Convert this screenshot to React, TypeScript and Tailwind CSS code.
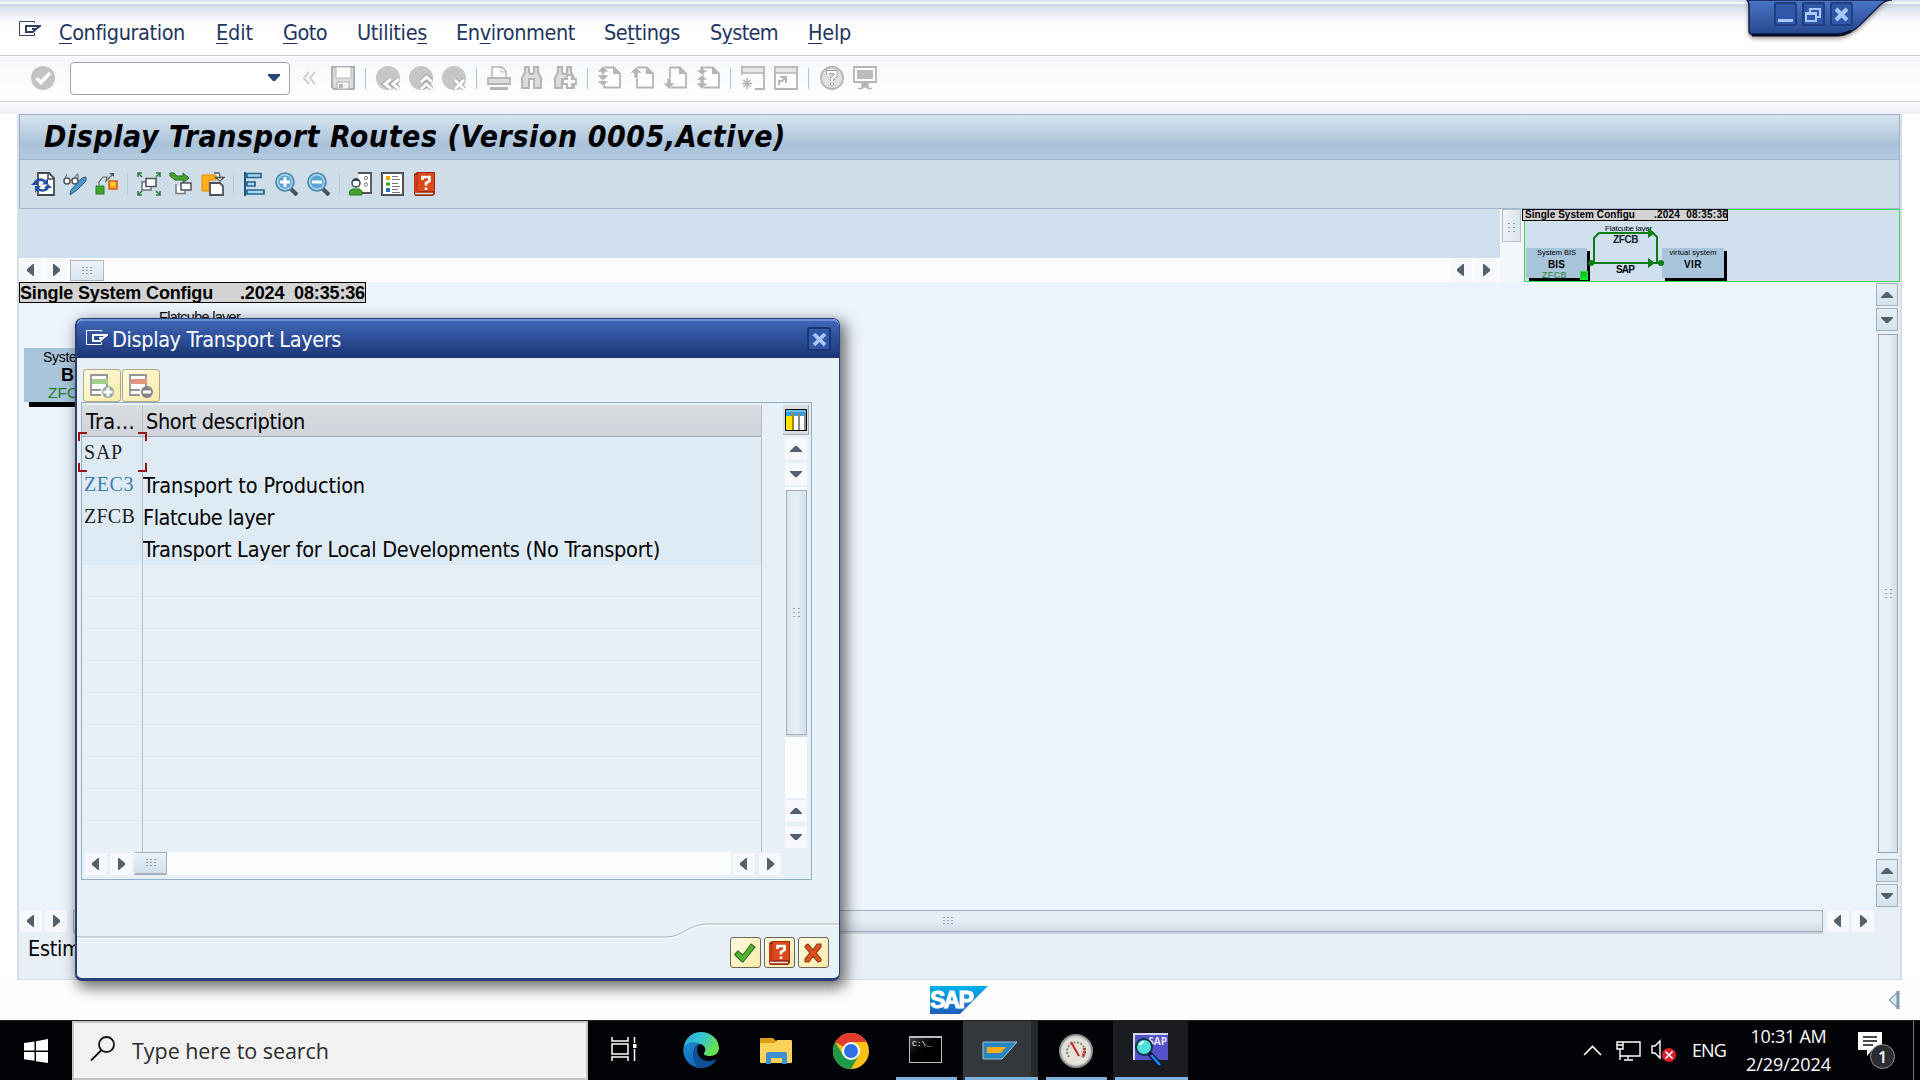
import React, { useLayoutEffect, useRef } from 'react';

const UI = "font-['DejaVu_Sans_Condensed','DejaVu_Sans',sans-serif] [font-stretch:condensed]";
const WIN = "font-['Open_Sans',sans-serif] [font-stretch:normal]";
const ARIAL = "font-['Liberation_Sans',sans-serif] [font-stretch:normal]";

/** Single-line text whose letter spacing is adjusted to fill a given width. */
function Fit({ w, className = '', children }: { w: number; className?: string; children: React.ReactNode }) {
  const ref = useRef<HTMLSpanElement>(null);
  useLayoutEffect(() => {
    const el = ref.current;
    if (!el) return;
    el.style.letterSpacing = '0px';
    const n = (el.textContent || '').length;
    el.style.letterSpacing = (w - el.getBoundingClientRect().width) / n + 'px';
  }, [w]);
  return (
    <span ref={ref} className={'inline-block whitespace-pre ' + className}>
      {children}
    </span>
  );
}

function Icon({ children, w = 24, h = 24, className = '' }: { children: React.ReactNode; w?: number; h?: number; className?: string }) {
  return (
    <svg width={w} height={h} viewBox={`0 0 ${w} ${h}`} className={'shrink-0 ' + className} fill="none">
      {children}
    </svg>
  );
}

function Hand({ color }: { color: string }) {
  return (
    <Icon w={23} h={18}>
      <path d="M16.500 3V1.500H1.500V15.500H16.500V13" stroke={color} />
      <path d="M8 6H22L18 9H14M8 5V12H15L18 9" stroke={color} strokeWidth="2" />
    </Icon>
  );
}

type Dir = 'up' | 'down' | 'left' | 'right';
function Arrow({ dir, boxed, className = '' }: { dir: Dir; boxed?: boolean; className?: string }) {
  const d = { up: 'M6 14V13L11 8H13L18 13V14Z', down: 'M6 8H18V9L13 14H11L6 9Z', left: 'M15 5V17H14L8 12V10L14 5Z', right: 'M9 5V17H10L16 12V10L10 5Z' }[dir];
  return (
    <span
      className={
        'flex shrink-0 items-center justify-center ' +
        (boxed ? 'h-[23px] w-[22px] border border-[#a2adbd] bg-gradient-to-b from-[#e4edf5] to-[#d4e4ec] ' : 'h-[22px] w-[22px] bg-[#f6f8fb] ') +
        className
      }
    >
      <Icon w={24} h={22}>
        <path d={d} fill="#53616e" />
      </Icon>
    </span>
  );
}

function Grip({ vertical }: { vertical?: boolean }) {
  return vertical ? (
    <Icon w={7} h={9}>
      <path d="M0 .5h2M5 .5h2M0 4.500h2M5 4.500h2M0 8.500h2M5 8.500h2" stroke="#8fa2b2" />
    </Icon>
  ) : (
    <Icon w={10} h={8}>
      <path d="M0 .5h2M4 .5h2M8 .5h2M0 3.500h2M4 3.500h2M8 3.500h2M0 6.500h2M4 6.500h2M8 6.500h2" stroke="#8fa2b2" />
    </Icon>
  );
}

const G = '#b5b5b5';
const L = '#dcdcdc';

function Binoculars({ plus }: { plus?: boolean }) {
  return (
    <Icon>
      <path d="M5 1H9V6L10 8H13L14 6V1H18V6L21 12V22H14V13H9V22H2V12L5 6Z" fill={L} stroke={G} strokeWidth="2" />
      {plus && <path d="M14 9h5v4h4v5h-4v4h-5v-4h-4v-5h4z" fill="#fff" stroke={G} strokeWidth="1.800" />}
    </Icon>
  );
}

function PageArrow({ kind }: { kind: 'first' | 'prev' | 'next' | 'last' }) {
  const arrows = {
    first: 'M6 0L12 6H8V8H4V6H0ZM4 8H8V9H12L6 15L0 9H4Z M4 14H8V15H12L6 20L0 15H4Z',
    prev: 'M6 1L12 7H8V12H4V7H0Z',
    next: 'M4 12H8V17H12L6 23L0 17H4Z',
    last: 'M4 0H8V4H12L6 9L0 4H4ZM6 9L12 14H8V17H12L6 23L0 17H4V14H0Z',
  }[kind];
  return (
    <Icon>
      <path d="M7 1.500H17L23 7.500V21.500H7V1.500" stroke={G} strokeWidth="1.800" fill="#fff" />
      <path d="M16 1V8H23Z" fill={G} />
      <path d={arrows} fill={G} stroke="#fff" strokeWidth=".6" />
    </Icon>
  );
}

function RoundNav({ kind }: { kind: 'back' | 'up' | 'cancel' }) {
  const d =
    kind === 'back' ? 'M15 13L9 18L15 23M23 13L17 18L23 23' : kind === 'up' ? 'M12 16L17.500 11L23 16M12 23L17.500 18L23 23' : 'M13 14L22 23M22 14L13 23';
  return (
    <Icon>
      <circle cx="12" cy="12" r="12" fill="#c6c6c6" />
      <path d={d} stroke="#aaa" strokeWidth="5" />
      <path d={d} stroke="#fff" strokeWidth="3" />
    </Icon>
  );
}

function HelpBook() {
  return (
    <Icon>
      <path d="M1 2L4 0H22V22L20 24H2L1 22Z" fill="#9e2c12" />
      <path d="M5 1H21V19H5Z" fill="#dc4a1c" />
      <path d="M1 3H5V20H1Z" fill="#c83a16" />
      <path d="M2 21.500H20" stroke="#e9e4e2" strokeWidth="1.500" />
      <path d="M9.500 8V5H16.500V9L13 11V13.500M13 15.500V18" stroke="#fff" strokeWidth="2.600" />
    </Icon>
  );
}

function Zoomer({ minus }: { minus?: boolean }) {
  return (
    <Icon>
      <path d="M16 17L22 23" stroke="#4d5156" strokeWidth="4" />
      <circle cx="10" cy="10" r="9" fill="#a5d0ea" stroke="#4987ad" strokeWidth="1.600" />
      <circle cx="10" cy="10" r="6.500" fill="#5aa5d3" />
      <path d={minus ? 'M5 10H15' : 'M5 10H15M10 5V15'} stroke="#fff" strokeWidth="3" />
    </Icon>
  );
}

function Sep({ className = '' }: { className?: string }) {
  return <span className={'w-px shrink-0 ' + className} />;
}

const U = ({ children }: { children: string }) => <span className="underline decoration-1 underline-offset-[3px]">{children}</span>;

function MenuBar() {
  const items: [number, number, React.ReactNode][] = [
    [13, 126, <><U>C</U>onfiguration</>],
    [31, 37, <><U>E</U>dit</>],
    [30, 44, <><U>G</U>oto</>],
    [30, 70, <>Utilitie<U>s</U></>],
    [29, 119, <>En<U>v</U>ironment</>],
    [29, 76, <>Se<U>t</U>tings</>],
    [30, 68, <>S<U>y</U>stem</>],
    [30, 43, <><U>H</U>elp</>],
  ];
  return (
    <div className="flex h-[52px] shrink-0 items-start border-b border-[#c3cad4] bg-[linear-gradient(#cdd8e6_0px,#e6ebf3_8px,#fbfcfe_18px,#fff_26px)]">
      <div className="ml-[18px] mt-[16px] w-[28px]"><Hand color="#33415f" /></div>
      <div className="mt-[15px] flex text-[21.5px] leading-[28px] text-[#1f3560]">
        {items.map(([ml, w, node], i) => (
          <div key={i} className="flex" style={{ marginLeft: ml, width: w }}>
            <Fit w={w}>{node}</Fit>
          </div>
        ))}
      </div>
    </div>
  );
}

function StandardToolbar() {
  const s = 'mx-[10px] h-[21px] bg-[#a9c3dd]';
  return (
    <div className="mt-px flex h-[45px] shrink-0 items-center border-b border-[#cdd2d8] bg-gradient-to-b from-[#f4f7fa] to-white pb-[2px] pl-[31px]">
      <Icon>
        <circle cx="12" cy="12" r="12" fill="#c3c3c3" />
        <path d="M5.500 12L10 16.500L19 7" stroke="#fff" strokeWidth="3.500" />
      </Icon>
      <div className="ml-[15px] flex h-[33px] w-[220px] items-center justify-end rounded-sm border border-[#a0a3a9] bg-white pr-[9px]">
        <Icon w={12} h={8}><path d="M0 0H12V1.500L7 7H5L0 1.500Z" fill="#2a4678" /></Icon>
      </div>
      <Icon w={14} h={14} className="ml-[12px]"><path d="M7 1L2 7L7 13M13 1L8 7L13 13" stroke="#cfcfcf" strokeWidth="2" /></Icon>
      <Icon className="ml-[15px]">
        <path d="M1 1H23V23H3L1 21Z" fill="#dcdcdc" stroke="#aeaeae" strokeWidth="2" />
        <path d="M5 1H20V12H5Z" fill="#fff" stroke="#b5b5b5" />
        <path d="M6 16H18V23H6Z" fill="#f4f4f4" stroke="#b0b0b0" />
        <path d="M8 18H12V22H8Z" fill="#b5b5b5" />
      </Icon>
      <Sep className={s} />
      <div className="flex gap-[9px]"><RoundNav kind="back" /><RoundNav kind="up" /><RoundNav kind="cancel" /></div>
      <Sep className={s} />
      <div className="flex gap-[9px]">
        <Icon>
          <path d="M5 11V1H15L19 5V11" fill="#fff" stroke={G} strokeWidth="1.500" />
          <path d="M14 1V6H19" stroke={G} />
          <path d="M1 12H23V18H1Z" fill={L} stroke={G} strokeWidth="1.800" />
          <path d="M3 22.500H21" stroke={G} strokeWidth="3" />
        </Icon>
        <Binoculars />
        <Binoculars plus />
      </div>
      <Sep className={s} />
      <div className="-ml-px flex gap-[9px]"><PageArrow kind="first" /><PageArrow kind="prev" /><PageArrow kind="next" /><PageArrow kind="last" /></div>
      <Sep className={s} />
      <div className="flex gap-[9px]">
        <Icon>
          <path d="M1 9V1H23V23H14" stroke={G} strokeWidth="1.800" />
          <path d="M1 1H23V7H1Z" fill="#e6e6e6" stroke={G} strokeWidth="1.500" />
          <path d="M6 12V23M1 17.500H11M2.500 14L9.500 21M9.500 14L2.500 21" stroke={G} strokeWidth="1.500" />
        </Icon>
        <Icon>
          <path d="M1 1H23V23H1Z" fill="#fff" stroke={G} strokeWidth="1.800" />
          <path d="M1 1H23V7H1Z" fill="#e6e6e6" stroke={G} strokeWidth="1.500" />
          <path d="M5 19V15H9M6 11H12V17M12 11L7 16" stroke={G} strokeWidth="2" />
        </Icon>
      </div>
      <Sep className={s} />
      <div className="ml-px flex gap-[9px]">
        <Icon>
          <circle cx="12" cy="12" r="11" fill="#e0e0e0" stroke={G} strokeWidth="1.800" />
          <path d="M8 9V6H15.500V10L12 12.500V15M12 16.500V19.500" stroke="#9d9d9d" strokeWidth="4" />
          <path d="M8 9V6H15.500V10L12 12.500V15M12 16.500V19" stroke="#fff" strokeWidth="2.200" />
        </Icon>
        <Icon>
          <path d="M1 1H23V16H1Z" fill="#fff" stroke={G} strokeWidth="1.800" />
          <path d="M4 4H20V13H4Z" fill="#bdbdbd" />
          <path d="M9 17H15V21H9ZM5 22.500H10M14 22.500H19" fill={G} stroke={G} strokeWidth="1.500" />
        </Icon>
      </div>
    </div>
  );
}

function AppToolbar() {
  const s = 'ml-[8px] mr-[9px] h-[20px] bg-[#b3c7da]';
  const green = '#36774a';
  return (
    <div className="flex h-[49px] shrink-0 items-center border-x border-b border-[#a3b5cd] bg-[#cfdde8] pl-[11px]">
      <div className="flex gap-[8px]">
        <Icon>
          <path d="M7 1H18L23 6V23H7Z" fill="#fff" stroke="#45494f" strokeWidth="1.800" />
          <path d="M17 1V7H23" stroke="#45494f" strokeWidth="1.500" />
          <path d="M4 12C4 8 10 6 14 9.500" stroke="#2450a4" strokeWidth="2.600" /><path d="M17 6V12.500H11Z" fill="#2450a4" /><path d="M0 13L4 9L8 13Z" fill="#2450a4" />
          <path d="M17 14C17 18 11 20 7 17" stroke="#2450a4" strokeWidth="2.600" /><path d="M4 21V14H10Z" fill="#2450a4" /><path d="M13 14L17 18L21 14Z" fill="#2450a4" transform="rotate(180 17 15)" />
        </Icon>
        <Icon>
          <circle cx="4" cy="9" r="3" fill="#fff" stroke="#555" strokeWidth="1.500" />
          <circle cx="12" cy="9" r="3" fill="#fff" stroke="#555" strokeWidth="1.500" />
          <path d="M1 8L4 2M7 8H9M12 5L14 2H15V7" stroke="#666" />
          <path d="M23 5V9L14 18L7 23L8 18L19 6Z" fill="#4d97c8" stroke="#286088" />
        </Icon>
        <Icon>
          <path d="M4 13V10L8 5H12L11 9L18 2" stroke="#666" strokeWidth="1.200" />
          <path d="M14 1H19V5Z" fill="#555" />
          <path d="M1 14H9V22H1Z" fill="#41a62a" stroke="#2c7a1c" /><path d="M14 9H22V17H14Z" fill="#ffa81c" stroke="#d8601c" strokeWidth="1.600" />
          <path d="M16 10h4v4h-4z" fill="#ffd23c" />
        </Icon>
      </div>
      <Sep className={s} />
      <div className="flex gap-[8px]">
        <Icon>
          <path d="M1 5V1H5M1 1L5 5M19 1H23V5M23 1L19 5M1 19V23H5M1 23L5 19M23 19V23H19M23 23L19 19" stroke={green} strokeWidth="1.600" />
          <path d="M9 10H5V18H14V15" stroke="#6b6f74" strokeWidth="1.500" fill="#fff" />
          <path d="M9 6.500H19V14.500H9Z" fill="#fff" stroke="#50545a" strokeWidth="1.600" />
        </Icon>
        <Icon>
          <path d="M7 12V21.500H16V19" stroke="#777" strokeWidth="1.500" fill="#fff" /><path d="M12 11H22V18H12Z" fill="#fff" stroke="#50545a" strokeWidth="1.500" />
          <path d="M1 1H5L8 4H14V1L20 6L14 11V8H6L1 4Z" fill="#46a430" stroke="#2d6f20" />
        </Icon>
        <Icon>
          <path d="M1 3H15V8H8V19H1Z" fill="#ffb019" stroke="#e68a00" />
          <path d="M13 1H17Q19 1 19 6M14.500 5.500H23L19 9Z" fill="#fff" stroke="#555" strokeWidth="1.300" />
          <path d="M9 11H19L22 14V23H9Z" fill="#fff" stroke="#4f5358" strokeWidth="1.800" />
        </Icon>
      </div>
      <Sep className={s} />
      <div className="flex gap-[8px]">
        <Icon>
          <path d="M2 0V24" stroke="#1d5681" strokeWidth="2" />
          <path d="M4 1.500H18V5.500H4ZM4 10H12V14H4ZM4 18H21V22H4Z" fill="#a9d6ef" stroke="#24658f" strokeWidth="1.700" />
        </Icon>
        <Zoomer />
        <Zoomer minus />
      </div>
      <Sep className={s} />
      <div className="flex gap-[8px]">
        <Icon>
          <path d="M9 1H22V21H12" fill="#fff" stroke="#4f5358" strokeWidth="1.800" />
          <circle cx="17" cy="6" r="1.600" stroke="#777" /><circle cx="17" cy="12.500" r="1.600" stroke="#777" />
          <circle cx="7" cy="11" r="4" fill="#fff" stroke="#3f4247" strokeWidth="1.500" /><path d="M3 10C3 5 11 5 11 10L9 9H5Z" fill="#3f4247" />
          <path d="M.5 23V19L3 17H10L13 19V23Z" fill="#43a32d" stroke="#2c7a1c" />
        </Icon>
        <Icon>
          <path d="M1 1H22V23H1Z" fill="#fff" stroke="#4f5358" strokeWidth="2" />
          <path d="M5 5H9M5 7H9" stroke="#e8a800" strokeWidth="2" /><path d="M5 12H9" stroke="#3b9a28" strokeWidth="3" /><path d="M5 18H9" stroke="#2572b4" strokeWidth="4" />
          <path d="M11 4.500H17M11 7.500H19M11 11.500H17M11 14.500H19M11 17.500H17M11 20.500H19" stroke="#777" />
        </Icon>
        <HelpBook />
      </div>
    </div>
  );
}

function OverviewGraph() {
  const g = '#0a7d14';
  return (
    <div className={'relative h-[73px] w-[376px] shrink-0 border border-[#3ad84a] bg-[#d0e0ef] ' + ARIAL}>
      <div className="absolute -left-[3px] -top-[1px] flex h-[12px] w-[206px] items-center border border-black bg-[#d3d3d3] pl-[2px] text-[10px] font-bold leading-[10px]">
        <Fit w={110}>Single System Configu</Fit><Fit w={74} className="ml-[19px]">.2024  08:35:36</Fit>
      </div>
      <div className="absolute left-[1px] top-[38px] flex h-[30px] w-[61px] flex-col items-center bg-[#a9c5dc] leading-none shadow-[3px_3px_0_#000]">
        <Fit w={39} className="mt-px text-[7.500px]">System BIS</Fit>
        <Fit w={17} className="mt-[3px] text-[10px] font-bold">BIS</Fit>
        <span className="mt-[1px] flex gap-[13px] pl-[17px] text-[9px] text-[#1f8030]"><Fit w={25}>ZFCB</Fit><span className="h-[9px] w-[8px] bg-[#13f02b] text-center text-[9px] leading-[9px]">R</span></span>
      </div>
      <div className="absolute left-[137px] top-[38px] flex h-[30px] w-[62px] flex-col items-center bg-[#a9c5dc] leading-none shadow-[3px_3px_0_#000]">
        <Fit w={47} className="mt-px text-[7.500px]">virtual system</Fit>
        <Fit w={18} className="mt-[3px] text-[10px] font-bold">VIR</Fit>
      </div>
      <span className="absolute left-[80px] top-[14px] text-[8px] leading-[9px]"><Fit w={47}>Flatcube layer</Fit></span>
      <span className="absolute left-[88px] top-[24px] text-[10px] font-bold leading-[11px] text-[#16202c]"><Fit w={25}>ZFCB</Fit></span>
      <span className="absolute left-[91px] top-[54px] text-[10px] font-bold leading-[11px]"><Fit w={18}>SAP</Fit></span>
      <Icon w={80} h={42} className="absolute left-[62px] top-[18px]">
        <path d="M4 35H74M7 35V10L12 5H66L70 9V35" stroke={g} strokeWidth="2" />
        <path d="M61 0L68 5L61 10ZM61 30L68 35L61 40Z" fill={g} /><circle cx="4" cy="35" r="3" fill={g} /><circle cx="74" cy="35" r="3" fill={g} />
      </Icon>
    </div>
  );
}

function MainCanvas() {
  return (
    <div className={'relative h-[627px] flex-1 bg-[#ebf3fc] ' + ARIAL}>
      <div className="absolute left-0 top-0 flex h-[21px] w-[347px] items-center border border-black bg-[#d3d3d3] text-[18px] font-bold leading-[20px]">
        <Fit w={193}>Single System Configu</Fit><Fit w={125} className="ml-[27px]">.2024  08:35:36</Fit>
      </div>
      <span className="absolute left-[140px] top-[26px] text-[14.500px] leading-[18px]"><Fit w={81}>Flatcube layer</Fit></span>
      <div className="absolute left-[5px] top-[66px] h-[54px] w-[98px] bg-[#a9c5dc] shadow-[5px_5px_0_#000]">
        <span className="absolute left-[19px] top-0 text-[14px] leading-[18px]"><Fit w={70}>System BIS</Fit></span>
        <span className="absolute left-[37px] top-[17px] text-[18px] font-bold leading-[20px]">BIS</span>
        <span className="absolute left-[24px] top-[36px] text-[15.500px] leading-[18px] text-[#1f8030]">ZFCB</span>
      </div>
    </div>
  );
}

function TitleTab() {
  const b = 'flex h-[24px] w-[23px] items-center justify-center rounded-[2px] border-2 border-[#1f3d80] bg-[#3158a8]';
  return (
    <div className="absolute right-0 top-0 h-[44px] w-[180px]">
      <Icon w={180} h={44} className="drop-shadow-[0_2px_2px_rgba(60,40,30,0.5)]">
        <defs><linearGradient id="tab" x2="0" y2="1"><stop stopColor="#4a74c6" /><stop offset="1" stopColor="#26478f" /></linearGradient></defs>
        <path d="M7 0Q9 2 9 6V30Q9 35 14 35H96Q110 35 120 25L140 5Q145 0 152 0Z" fill="url(#tab)" stroke="#121f4c" strokeWidth="1.500" />
        <path d="M12 35H96Q104 35 111 31" stroke="#060b26" strokeWidth="3" />
      </Icon>
      <div className="absolute left-[34px] top-[2px] flex gap-[5px]">
        <span className={b}><Icon w={17} h={17}><path d="M1 14.500H16" stroke="#a9c6ff" strokeWidth="3" /></Icon></span>
        <span className={b}><Icon w={17} h={17}><path d="M1 7H11V15H1ZM5 7V3H15V11H11M1 8H11M5 3H15" stroke="#a9c6ff" strokeWidth="2" /></Icon></span>
        <span className={b}><Icon w={15} h={15}><path d="M2 2L13 13M13 2L2 13" stroke="#a9c6ff" strokeWidth="4" /></Icon></span>
      </div>
    </div>
  );
}

const layers = [
  { id: 'SAP', text: '', w: 0, color: 'text-[#222]', iw: 39 },
  { id: 'ZEC3', text: 'Transport to Production', w: 222, color: 'text-[#3a7fb0]', iw: 50 },
  { id: 'ZFCB', text: 'Flatcube layer', w: 131, color: 'text-[#222]', iw: 51 },
  { id: '', text: 'Transport Layer for Local Developments (No Transport)', w: 517, color: '', iw: 0 },
];

function RowsIcon({ minus }: { minus?: boolean }) {
  return (
    <Icon>
      <path d="M1 1H18V21H1Z" fill="#fff" />
      <path d="M1 22V1H17V13M1 16H11M1 21H11" stroke="#949494" strokeWidth="1.800" />
      <path d="M2 5H18V10H2Z" fill={minus ? '#e5937a' : '#a6cf8c'} />
      {minus ? (
        <><circle cx="18" cy="18" r="6" fill="#85858b" /><path d="M14 18H22" stroke="#fff" strokeWidth="3" /></>
      ) : (
        <><circle cx="18" cy="18" r="6" fill="#93a79e" /><path d="M13.500 18H22.500M18 13.500V22.500" stroke="#fff" strokeWidth="3" /></>
      )}
    </Icon>
  );
}

function LayersTable() {
  return (
    <div className="ml-[4px] flex h-[478px] w-[731px] shrink-0 flex-col border border-[#93aec8] bg-[#e8f0f7]">
      <div className="flex h-[449px]">
        <div className="relative mt-[2px] flex w-[680px] flex-col border-r border-[#b3bfca] bg-[#e8f0f7]">
          <div className="flex h-[32px] shrink-0 border-b border-[#a5abb4] bg-gradient-to-b from-[#d8dde0] to-[#cfd3db] pt-[2px] text-[21.5px] leading-[30px]">
            <div className="w-[61px] pl-[4px]"><Fit w={49}>Tra...</Fit></div>
            <div className="pl-[3px]"><Fit w={159}>Short description</Fit></div>
          </div>
          {layers.map((r, i) => (
            <div key={i} className="flex h-[32px] shrink-0 bg-[#deebf5]">
              <div className={"w-[61px] pl-[2px] font-['Liberation_Serif',serif] text-[20px] leading-[31px] " + r.color}>
                {r.id && <Fit w={r.iw}>{r.id}</Fit>}
              </div>
              <div className="text-[21.5px] leading-[33px]">{r.text && <Fit w={r.w}>{r.text}</Fit>}</div>
            </div>
          ))}
          {Array.from({ length: 8 }, (_, i) => (
            <div key={i} className="h-[32px] shrink-0 border-b border-[#dde7ee]" />
          ))}
          <div className="absolute bottom-0 left-[60px] top-0 w-px bg-[#b5c2cd]" />
          <Icon w={70} h={40} className="absolute -left-[4px] top-[27px]">
            <path d="M1 9V1H9M60 1H68V9M1 31V39H9M60 39H68V31" stroke="#981518" strokeWidth="2" />
          </Icon>
        </div>
        <div className="ml-[21px] flex w-[26px] flex-col items-center">
          <div className="mt-[2px] flex h-[30px] w-[26px] shrink-0 items-center justify-center border-b border-r border-[#a5abb4] bg-[#d8dde0]">
            <Icon w={22} h={22}>
              <path d="M1 1H21V21H1Z" fill="#fff" />
              <path d="M1 1H21V7H1Z" fill="#3a9fdd" /><path d="M1 2H21" stroke="#a1daf6" />
              <path d="M1 7H7V21H1Z" fill="#ffe600" /><path d="M8 4V21" stroke="#a78600" strokeWidth="2" /><path d="M14 4V21M20 4V21" stroke="#888" strokeWidth="2" />
              <path d="M.5 .5H21.500V21.500H.5Z" stroke="#000" />
            </Icon>
          </div>
          <Arrow dir="up" className="mt-[3px]" />
          <Arrow dir="down" className="mt-[3px]" />
          <div className="mt-[2px] flex w-[22px] flex-1 flex-col bg-[#fbfcfd] pl-[1px] pt-[3px]">
            <div className="flex h-[245px] items-center justify-center border border-[#a3afbc] bg-gradient-to-r from-[#dde7ee] via-[#e6eff8] to-[#d3dfe8] shadow-[0_2px_0_#d5dae0]"><Grip vertical /></div>
          </div>
          <Arrow dir="up" className="mt-[2px]" />
          <Arrow dir="down" className="mb-[4px] mt-[4px]" />
        </div>
      </div>
      <div className="flex h-[23px] items-center pl-[3px]">
        <Arrow dir="left" /><Arrow dir="right" className="ml-[3px]" />
        <div className="ml-[2px] flex h-[23px] w-[597px] bg-[#fbfcfd]">
          <div className="flex h-[23px] w-[33px] items-center justify-center border border-b-2 border-[#a3afbc] border-l-transparent bg-gradient-to-b from-[#eaf2f9] to-[#d3dfe9]"><Grip /></div>
        </div>
        <Arrow dir="left" className="ml-[2px]" /><Arrow dir="right" className="ml-[4px]" />
      </div>
    </div>
  );
}

function LayersDialog() {
  const y = 'flex items-center justify-center rounded-[3px] border bg-gradient-to-br from-[#fffbe0] to-[#fbeaa6] ';
  return (
    <div className="absolute left-[75px] top-[318px] flex h-[663px] w-[765px] flex-col overflow-visible rounded-[7px] border-b-[3px] border-l-2 border-r border-t border-[#2a3f76] bg-[#e8f0f8] shadow-[4px_5px_14px_2px_rgba(50,45,45,0.68)]">
      <div className="flex h-[39px] shrink-0 items-center rounded-t-[6px] border-t-2 border-[#6a90d6] bg-gradient-to-b from-[#4166b8] to-[#1a3675] pr-[8px]">
        <div className="-mt-[4px] ml-[8px]"><Hand color="#fff" /></div>
        <div className="ml-[4px] flex-1 text-[21.5px] leading-[30px] text-white"><Fit w={229}>Display Transport Layers</Fit></div>
        <span className="-mt-[1px] flex h-[24px] w-[24px] items-center justify-center rounded-[3px] border-2 border-[#1a3576] bg-[#3158a8]">
          <Icon w={15} h={15}><path d="M2 2L13 13M13 2L2 13" stroke="#a9c6ff" strokeWidth="3.800" /></Icon>
        </span>
      </div>
      <div className="flex h-[44px] shrink-0 items-end gap-[1px] pl-[6px]">
        <span className={y + 'h-[33px] w-[38px] border-[#aba888]'}><RowsIcon /></span>
        <span className={y + 'h-[33px] w-[38px] border-[#aba888]'}><RowsIcon minus /></span>
      </div>
      <LayersTable />
      <Icon w={762} h={16} className="mt-[43px]">
        <path d="M0 15H590C605 15 612 2 631 2H762" stroke="#fff" strokeWidth="1.500" />
        <path d="M0 14H590C605 14 612 1 631 1H762" stroke="#a7b1c3" />
      </Icon>
      <div className="-mt-[2px] flex gap-[3px] pl-[653px]">
        <span className={y + 'h-[31px] w-[31px] border-[#6b6558]'}><Icon><path d="M1 13L4 10L9 14L17 3L21 6L9 21H8L1 14Z" fill="#55b52e" stroke="#2f7027" strokeWidth="1.200" /></Icon></span>
        <span className={y + 'h-[31px] w-[31px] border-[#6b6558]'}><HelpBook /></span>
        <span className={y + 'h-[31px] w-[31px] border-[#6b6558]'}>
          <Icon><path d="M4 4L6 3L11 9L15 3H19V6L14 12L19 18V20L16 21L11 15L7 21H3V18L8 12L3 6Z" fill="#e2511d" stroke="#93401e" strokeWidth="1.200" /></Icon>
        </span>
      </div>
    </div>
  );
}

function TaskItem({ children, bg = '', bar = '' }: { children: React.ReactNode; bg?: string; bar?: string }) {
  return (
    <div className={'relative flex w-[75px] items-center justify-center ' + bg}>
      {children}
      {bar && <div className={'absolute bottom-0 h-[3px] bg-[#7eb2dd] ' + bar} />}
    </div>
  );
}

function Taskbar() {
  return (
    <div className={'flex h-[60px] shrink-0 border-t border-[#222] bg-[#020307] ' + WIN}>
      <div className="flex w-[72px] items-center justify-center">
        <Icon><path d="M0 4L10.500 2.500V11.500H0ZM12 2.200L24 0V11.500H12ZM0 13H10.500V21.800L0 20.300ZM12 13H24V24L12 22.200Z" fill="#fff" /></Icon>
      </div>
      <div className="flex h-[59px] w-[516px] items-center border-2 border-[#c6c6c6] bg-[#f2f2f2] pl-[16px]">
        <Icon w={25} h={26} className="-mt-[3px]"><circle cx="16.500" cy="8.500" r="7.500" stroke="#111" strokeWidth="1.800" /><path d="M11.500 14L1 24.500" stroke="#111" strokeWidth="1.800" /></Icon>
        <Fit w={197} className="ml-[17px] mt-px text-[21.5px] leading-[28px] text-[#2b2b2b]">Type here to search</Fit>
      </div>
      <div className="flex">
        <TaskItem>
          <Icon w={26} h={24} className="-ml-[4px] -mt-[3px]"><path d="M1 0V4H17V0M1 24V20H17V24M1 7H17V17H1ZM23.500 0V6M23.500 12V24" stroke="#fff" strokeWidth="1.500" /><path d="M22 7H25.500V11H22Z" fill="#fff" /></Icon>
        </TaskItem>
        <TaskItem>
          <Icon w={36} h={36} className="-mt-px">
            <defs>
              <linearGradient id="e1" x2="1" y2=".4"><stop stopColor="#29a6e0" /><stop offset=".55" stopColor="#35c6cf" /><stop offset="1" stopColor="#6be04f" /></linearGradient>
              <linearGradient id="e2" x2="1" y2="1"><stop stopColor="#1c8fd8" /><stop offset="1" stopColor="#0d4f9e" /></linearGradient>
            </defs>
            <path d="M0.500 16C2 6 9 0 18 0C28 0 36 7 36 16C36 21 32 24 27 24C23 24 20 23 21 21C24 18 22 13 17 12C10 10 3 12 0.500 16Z" fill="url(#e1)" />
            <path d="M0.500 16C3 10 11 9 17 12C12 13 10 18 12 23C15 30 24 32 33 27C30 33 24 36 18 36C8 36-1 27 0.500 16Z" fill="url(#e2)" />
            <path d="M17 12C8 15 8 28 15 35C24 37 31 33 33.500 27C27 31 19 29 16 24C13 19 14 14 17 12Z" fill="#0f4f95" />
          </Icon>
        </TaskItem>
        <TaskItem>
          <Icon w={32} h={28}>
            <path d="M0 2Q0 1 1 1H13L16 4V8H0Z" fill="#d9a017" /><path d="M0 6H15L17 3H31Q32 3 32 4V25Q32 26 31 26H1Q0 26 0 25Z" fill="#fbd35b" />
            <path d="M6 17Q6 15 8 15H25Q27 15 27 17V27H22V21H11V27H6Z" fill="#3c91d2" />
          </Icon>
        </TaskItem>
        <TaskItem>
          <Icon w={36} h={36}>
            <circle cx="18" cy="18" r="18" fill="#fbc116" />
            <path d="M18 18L2.400 9A18 18 0 0 1 33.600 9H18Z" fill="#e33b2e" />
            <path d="M2.400 9A18 18 0 0 0 18 36L25.800 22.500L10.200 22.500Z" fill="#1f9a49" />
            <circle cx="18" cy="18" r="9" fill="#fff" /><circle cx="18" cy="18" r="7" fill="#2f6fe4" />
          </Icon>
        </TaskItem>
        <TaskItem bar="left-[8px] w-[61px]">
          <div className="-mt-[3px] h-[27px] w-[33px] border border-t-2 border-[#b8bcc0] bg-gradient-to-br from-[#3a3a3a] to-black to-60% pl-[2px] font-['Liberation_Mono',monospace] text-[8px] leading-[11px] text-white">C:\_</div>
        </TaskItem>
        <TaskItem bg="bg-[#34373b] border-r-[7px] border-[#26282b]" bar="left-[2px] w-[73px]">
          <Icon w={36} h={20} className="ml-[5px]"><path d="M1 1H35L20 18H1Z" fill="#2687c2" stroke="#9cc4de" /><path d="M5 12V6H24L19 12Z" fill="#f6ab12" /></Icon>
        </TaskItem>
        <TaskItem bar="left-[8px] w-[61px]">
          <Icon w={34} h={34}>
            <circle cx="17" cy="17" r="16" fill="#d9d7d1" stroke="#8d9191" strokeWidth="2" /><circle cx="17" cy="17" r="13" fill="#e6e1d6" />
            <path d="M10 23A9 9 0 1 1 24 23" stroke="#8b8983" strokeWidth="2" strokeDasharray="2 1.500" /><path d="M25 14A9 9 0 0 1 23 23" stroke="#b03030" strokeWidth="3" strokeDasharray="2 1" />
            <path d="M12 8L20 22" stroke="#c1272d" strokeWidth="2" />
          </Icon>
        </TaskItem>
        <TaskItem bg="bg-[#1a1c20]" bar="left-[2px] w-[73px]">
          <div className="relative -mt-[2px] h-[34px] w-[35px]">
            <div className="h-[27px] w-[35px] border-l-2 border-t-2 border-[#d8d8f4] bg-[#5552c8] pr-px text-right text-[10px] font-bold leading-[12px] text-[#e3e6ff]">SAP</div>
            <Icon w={35} h={34} className="absolute left-0 top-0"><path d="M16 20L27 32" stroke="#04102f" strokeWidth="5" /><path d="M18 22L27 32" stroke="#1590ff" strokeWidth="2.500" /><circle cx="11" cy="14" r="8" fill="#4fe0dc" stroke="#0d3045" strokeWidth="2" /><path d="M7 12Q8 9 11 9" stroke="#fff" strokeWidth="2" /></Icon>
          </div>
        </TaskItem>
      </div>
      <div className="ml-auto flex items-center text-white">
        <Icon w={19} h={11}><path d="M1 10L9.500 1.500L18 10" stroke="#fff" strokeWidth="1.700" /></Icon>
        <Icon w={25} h={20} className="ml-[14px]"><path d="M7 1H24V15H4V9M12 15V18M8 19H17M1 1H7V8H1ZM4 8V19M1 4H7" stroke="#fff" strokeWidth="1.400" /></Icon>
        <Icon w={26} h={24} className="ml-[10px]"><path d="M1 7H4L9 2V19L4 14H1Z" stroke="#fff" strokeWidth="1.400" /><circle cx="18" cy="16" r="7" fill="#d8202f" /><path d="M14.500 12.500L21.500 19.500M21.500 12.500L14.500 19.500" stroke="#fff" strokeWidth="1.600" /></Icon>
        <Fit w={34} className="ml-[15px] text-[18px]">ENG</Fit>
        <div className="ml-[20px] flex w-[85px] flex-col items-center text-[18px] leading-[28px]">
          <Fit w={76} className="-mt-[2px]">10:31 AM</Fit><Fit w={85}>2/29/2024</Fit>
        </div>
        <div className="relative ml-[27px] h-[37px] w-[37px]">
          <Icon w={25} h={26}><path d="M0 0H24V18H14L9 24V18H0Z" fill="#fff" /><path d="M5 5H19M5 9H19M5 13H15" stroke="#111" strokeWidth="1.300" /></Icon>
          <span className="absolute bottom-0 right-0 flex h-[25px] w-[25px] items-center justify-center rounded-full border border-[#8f8f8f] bg-[#2c2d30] text-[16px] font-semibold leading-none">1</span>
        </div>
        <div className="ml-[18px] mr-[6px] h-[59px] w-px bg-[#75777a]" />
      </div>
    </div>
  );
}

export default function App() {
  return (
    <div className={'relative flex h-[1080px] w-[1920px] flex-col overflow-hidden bg-white text-black ' + UI}>
      <div className="h-[4px] shrink-0 border-b-2 border-[#f7f9fc] bg-[#dfe5ef]" />
      <MenuBar />
      <StandardToolbar />
      <div className="h-[12px] shrink-0 bg-gradient-to-b from-[#fafbfc] to-[#edf0f5]" />
      <div className="ml-[17px] flex h-[866px] w-[1885px] shrink-0 flex-col border-b border-l-2 border-r-2 border-[#d5dde8] bg-[#e8eff6]">
        <div className="flex h-[46px] shrink-0 items-center border border-[#9fb5cb] bg-[linear-gradient(#d6e5ef,#c0d3e4_35%,#a9c2da_65%,#b2c9de)] pl-[24px] text-[30px] font-bold italic leading-[40px]">
          <Fit w={742} className="-mt-px">Display Transport Routes (Version 0005,Active)</Fit>
        </div>
        <AppToolbar />
        <div className="flex h-[73px] shrink-0">
          <div className="flex w-[1481px] flex-col">
            <div className="h-[49px] bg-[#d0e0ef]" />
            <div className="flex h-[24px] items-center bg-[#fcfcfd] pb-px">
              <Arrow dir="left" className="ml-px" /><Arrow dir="right" className="ml-[3px]" />
              <div className="ml-[3px] mt-[2px] flex h-[21px] w-[34px] items-center justify-center border border-[#a8b8cc] bg-gradient-to-b from-[#edf4fa] to-[#d9e4ec]"><Grip /></div>
              <Arrow dir="left" className="ml-auto" /><Arrow dir="right" className="ml-[3px] mr-[3px]" />
            </div>
          </div>
          <div className="flex w-[24px] flex-col bg-[#f3f6fa] pl-[2px]">
            <div className="flex h-[33px] w-[19px] items-center justify-center border border-[#b4bfcc] bg-gradient-to-r from-[#f0f4f8] to-[#d9e3ec] pt-[3px]"><Grip vertical /></div>
          </div>
          <OverviewGraph />
        </div>
        <div className="flex h-[627px] shrink-0">
          <MainCanvas />
          <div className="flex w-[24px] flex-col items-end bg-[#e8eff6] pr-[2px]">
            <Arrow dir="up" boxed className="mt-px" />
            <Arrow dir="down" boxed className="mt-[2px]" />
            <div className="mt-[3px] flex h-[519px] w-[20px] items-center justify-center border border-[#9aa5b8] bg-gradient-to-r from-[#e9f1fa] via-[#e6eff8] to-[#cfdfe8]"><Grip vertical /></div>
            <Arrow dir="up" boxed className="mt-[6px]" />
            <Arrow dir="down" boxed className="mt-[2px]" />
          </div>
        </div>
        <div className="flex h-[24px] shrink-0 items-center pb-px">
          <Arrow dir="left" className="ml-px" /><Arrow dir="right" className="ml-[3px]" />
          <div className="ml-[6px] flex h-[22px] w-[1750px] items-center justify-center border border-[#a3afbc] bg-gradient-to-b from-[#e3edf6] via-[#e2edf5] to-[#cfdae4] shadow-[0_2px_0_#c9d2dc]"><Grip /></div>
          <Arrow dir="left" className="ml-[4px]" /><Arrow dir="right" className="ml-[3px]" />
        </div>
        <div className="pl-[9px] text-[21.5px] leading-[32px] tracking-[-0.3px]">Estimated</div>
      </div>
      <div className="flex flex-1 items-center bg-[#fdfdfd]">
        <div className="relative ml-[930px] h-[28px] w-[58px]">
          <Icon w={58} h={28}>
            <defs><linearGradient id="sap" x2="0" y2="1"><stop stopColor="#00b1eb" /><stop offset="1" stopColor="#1d5fbb" /></linearGradient></defs>
            <path d="M0 0H58L30 28H0Z" fill="url(#sap)" />
          </Icon>
          <span className={'absolute left-0 top-[3px] text-[23px] font-bold leading-[23px] text-white [-webkit-text-stroke:1px_#fff] ' + ARIAL}><Fit w={42}>SAP</Fit></span>
        </div>
        <Icon w={12} h={18} className="ml-auto mr-[20px]"><path d="M10 1V17L1 9Z" fill="#d6e6f1" stroke="#5d7486" /><path d="M10 0V18" stroke="#7f98a9" strokeWidth="3" /></Icon>
      </div>
      <Taskbar />
      <TitleTab />
      <LayersDialog />
    </div>
  );
}
